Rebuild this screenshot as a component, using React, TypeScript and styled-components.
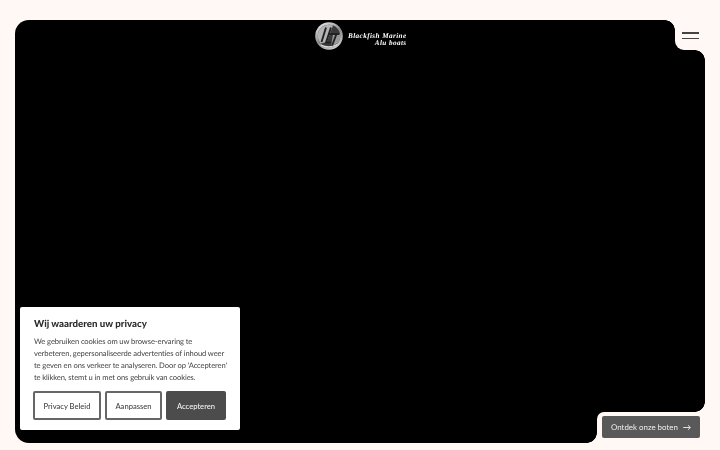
import React from "react";
import styled, { createGlobalStyle } from "styled-components";

const Global = createGlobalStyle`
  html, body { margin: 0; padding: 0; height: 100%; background: #fff8f4; overflow: hidden; }
  #root { height: 100%; }
  * { box-sizing: border-box; }
`;

const Page = styled.div`
  width: 720px;
  height: 450px;
  padding: 20px 15px 7px;
  font-family: "Lato", "Noto Sans", sans-serif;
  text-rendering: geometricPrecision;
`;

const Hero = styled.main`
  position: relative;
  width: 690px;
  height: 423px;
  background: #000;
  border-radius: 14px;
  filter: blur(0.3px);
`;

const TopNotch = styled.div`
  position: absolute;
  top: 0;
  right: 0;
  width: 30px;
  height: 30px;
  background: #fff8f4;
  border-bottom-left-radius: 9px;
  &::before, &::after {
    content: "";
    position: absolute;
    width: 10px;
    height: 10px;
    background: radial-gradient(circle at 0 100%, transparent 9.5px, #fff8f4 10px);
  }
  &::before { top: 0; left: -10px; }
  &::after { bottom: -10px; right: 0; }
`;

const BottomNotch = styled.div`
  position: absolute;
  right: 0;
  bottom: 0;
  width: 108px;
  height: 31px;
  background: #fff8f4;
  border-top-left-radius: 7px;
  &::before, &::after {
    content: "";
    position: absolute;
    width: 10px;
    height: 10px;
    background: radial-gradient(circle at 0 0, transparent 9.5px, #fff8f4 10px);
  }
  &::before { bottom: 0; left: -10px; }
  &::after { top: -10px; right: 0; }
`;

const Logo = styled.a`
  position: absolute;
  top: 2px;
  left: 300px;
  display: flex;
  align-items: center;
  gap: 5px;
  height: 28px;
`;

const LogoText = styled.div`
  display: flex;
  flex-direction: column;
  align-items: flex-end;
  margin-top: 8px;
  color: #fff;
  font-family: "Liberation Serif", serif;
  font-style: italic;
  font-weight: 700;
  font-size: 7.2px;
  line-height: 7px;
  letter-spacing: 0.4px;
  white-space: nowrap;
`;

const Burger = styled.button`
  position: absolute;
  top: 12px;
  right: 6px;
  width: 17px;
  height: 7px;
  padding: 0;
  border: 0;
  background: none;
  display: flex;
  flex-direction: column;
  justify-content: space-between;
  span { display: block; height: 1.5px; background: #444; }
`;

const CtaButton = styled.a`
  position: absolute;
  right: 5px;
  bottom: 5px;
  width: 98px;
  height: 22px;
  display: flex;
  align-items: center;
  justify-content: space-between;
  padding: 0 9px;
  background: #595959;
  border-radius: 2px;
  color: #eee;
  font-size: 7.9px;
  white-space: nowrap;
`;

const Cookie = styled.section`
  position: absolute;
  left: 5px;
  bottom: 13px;
  width: 220px;
  height: 123px;
  background: #fff;
  border-radius: 2px;
  padding: 11px 13px;
  display: flex;
  flex-direction: column;
`;

const Title = styled.h2`
  margin: 0;
  padding-left: 1px;
  font-size: 9.7px;
  line-height: 12px;
  font-weight: 900;
  color: #2c2c2c;
`;

const Body = styled.p`
  margin: 5px 0 0;
  padding-left: 1px;
  font-size: 7.6px;
  letter-spacing: -0.1px;
  line-height: 12px;
  color: #444;
  white-space: nowrap;
`;

const Actions = styled.div`
  display: grid;
  grid-template-columns: 68px 57px 60px;
  gap: 4px;
  margin-top: 8px;
`;

const Btn = styled.button<{ $primary?: boolean }>`
  height: 29px;
  padding: 0;
  border-radius: 2px;
  border: 2px solid ${p => (p.$primary ? "#4c4c4c" : "#666")};
  background: ${p => (p.$primary ? "#4c4c4c" : "#fff")};
  color: ${p => (p.$primary ? "#f2f2f2" : "#444")};
  font-family: inherit;
  font-size: 7.6px;
  font-weight: 500;
`;

const LogoMark = () => (
  <svg width="28" height="28" viewBox="0 0 28 28" aria-hidden>
    <defs>
      <linearGradient id="ring" x1="0.1" y1="0" x2="0.7" y2="1">
        <stop offset="0" stopColor="#f0f0f0" />
        <stop offset="0.55" stopColor="#8a8a8a" />
        <stop offset="1" stopColor="#d0d0d0" />
      </linearGradient>
    </defs>
    <circle cx="14" cy="14" r="13.8" fill="url(#ring)" />
    <circle cx="14" cy="14" r="11.2" fill="#3a3a3a" />
    <path d="M4.4 8 A11.2 11.2 0 0 1 18 3.6 L12 20 L5.6 21.4 A11.2 11.2 0 0 1 4.4 8 Z" fill="#b4b4b4" />
    <path d="M18 12.5 H25 A11.2 11.2 0 0 1 23 21 L16 24.6 Z" fill="#9a9a9a" />
    <path d="M11 5.5 L6.5 20 M16 5.5 L11 20.5 H16 M13 12 H24 M21.5 12 L16.5 25" stroke="#222" strokeWidth="1.9" fill="none" />
    <path d="M6 23 Q14 27 22 22.5" stroke="#ddd" strokeWidth="1.2" fill="none" />
  </svg>
);

const Arrow = () => (
  <svg width="8" height="7" viewBox="0 0 8 7" aria-hidden fill="none" stroke="#eee" strokeWidth="0.9">
    <path d="M0.2 3.5 H7.2 M5 1.2 L7.4 3.5 L5 5.8" />
  </svg>
);

export default function App() {
  return (
    <Page>
      <Global />
      <Hero>
        <TopNotch>
          <Burger aria-label="Menu"><span /><span /></Burger>
        </TopNotch>
        <Logo>
          <LogoMark />
          <LogoText>
            <span>Blackfish Marine</span>
            <span>Alu boats</span>
          </LogoText>
        </Logo>
        <BottomNotch>
          <CtaButton>
            Ontdek onze boten
            <Arrow />
          </CtaButton>
        </BottomNotch>
        <Cookie>
          <Title>Wij waarderen uw privacy</Title>
          <Body>
            We gebruiken cookies om uw browse-ervaring te<br />
            verbeteren, gepersonaliseerde advertenties of inhoud weer<br />
            te geven en ons verkeer te analyseren. Door op 'Accepteren'<br />
            te klikken, stemt u in met ons gebruik van cookies.
          </Body>
          <Actions>
            <Btn>Privacy Beleid</Btn>
            <Btn>Aanpassen</Btn>
            <Btn $primary>Accepteren</Btn>
          </Actions>
        </Cookie>
      </Hero>
    </Page>
  );
}
